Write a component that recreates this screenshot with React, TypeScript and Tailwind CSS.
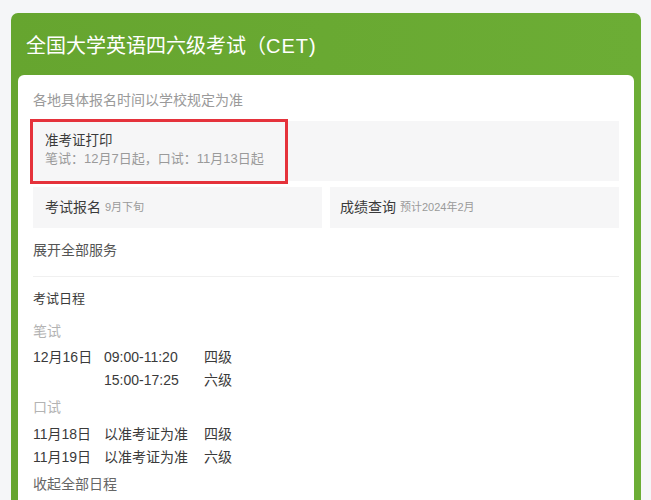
import React from 'react'

const font = { fontFamily: '"Liberation Sans", "Noto Sans CJK SC", sans-serif' }

type Row = { date: string; time: string; level: string }

const written: Row[] = [
  { date: '12月16日', time: '09:00-11:20', level: '四级' },
  { date: '', time: '15:00-17:25', level: '六级' },
]

const oral: Row[] = [
  { date: '11月18日', time: '以准考证为准', level: '四级' },
  { date: '11月19日', time: '以准考证为准', level: '六级' },
]

function ScheduleRows({ rows }: { rows: Row[] }) {
  return (
    <div className="flex flex-col">
      {rows.map((r, i) => (
        <div key={i} className="flex h-[23px] items-center text-[14px] text-[#3a3a3a]">
          <span className="w-[71px]">{r.date}</span>
          <span className="w-[100px]">{r.time}</span>
          <span>{r.level}</span>
        </div>
      ))}
    </div>
  )
}

export default function App() {
  return (
    <div className="h-[500px] w-[651px] overflow-hidden bg-[#f5f6f8] pl-[11px] pt-[13px]" style={font}>
      <div className="w-[630px] rounded-[7px] bg-gradient-to-r from-[#66a52f] to-[#6cad35] pb-4">
        <h1 className="pl-[15px] pt-[19px] pb-[15px] text-[20px] leading-[28px] text-white">
          全国大学英语四六级考试（<span className="tracking-[1px]">CET</span>)
        </h1>

        <div className="mx-[7px] rounded-[6px] bg-white px-[15px] pt-[15px] pb-6">
          <p className="text-[14px] leading-[20px] text-[#9a9a9a]">各地具体报名时间以学校规定为准</p>

          {/* admit card */}
          <div className="relative mt-[11px] bg-[#f6f6f7] px-[12px] pt-[11px] pb-[13px]">
            <div className="text-[13.5px] leading-[18px] text-[#3a3a3a]">准考证打印</div>
            <div className="text-[13px] leading-[18px] text-[#9a9a9a]">笔试：12月7日起，口试：11月13日起</div>
            <div className="absolute left-[-3px] top-[-2px] h-[65px] w-[258px] border-[3px] border-[#e5323b]" />
          </div>

          <div className="mt-[6px] grid grid-cols-[289px_1fr] gap-[8px]">
            <div className="flex h-[41px] items-center gap-[4px] bg-[#f6f6f7] px-[12px]">
              <span className="text-[14px] text-[#3a3a3a]">考试报名</span>
              <span className="text-[11px] text-[#9a9a9a]">9月下旬</span>
            </div>
            <div className="flex h-[41px] items-center gap-[4px] bg-[#f6f6f7] px-[10px]">
              <span className="text-[14px] text-[#3a3a3a]">成绩查询</span>
              <span className="text-[11px] text-[#9a9a9a]">预计2024年2月</span>
            </div>
          </div>

          <div className="mt-[12px] text-[14px] leading-[20px] text-[#555]">展开全部服务</div>

          <div className="mt-[16px] h-px bg-[#f0f0f0]" />

          <div className="mt-[12px] text-[13px] leading-[20px] text-[#3a3a3a]">考试日程</div>

          <div className="mt-[12px] text-[14px] leading-[20px] text-[#b3b3b3]">笔试</div>
          <div className="mt-[5px]">
            <ScheduleRows rows={written} />
          </div>

          <div className="mt-[5px] text-[14px] leading-[20px] text-[#b3b3b3]">口试</div>
          <div className="mt-[6px]">
            <ScheduleRows rows={oral} />
          </div>

          <div className="mt-[5px] text-[14px] leading-[20px] text-[#666]">收起全部日程</div>
        </div>
      </div>
    </div>
  )
}
